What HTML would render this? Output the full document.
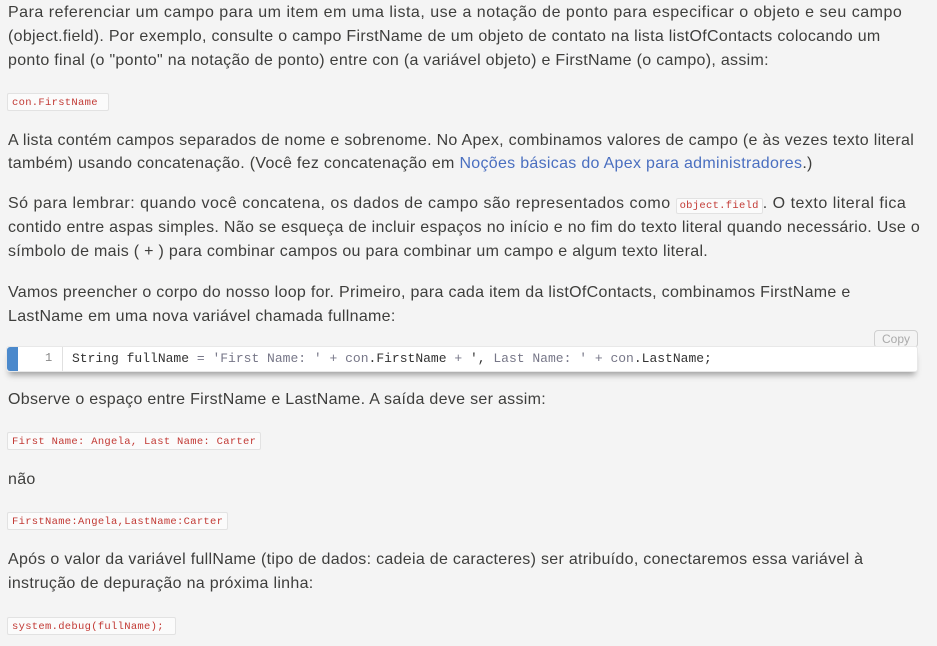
<!DOCTYPE html>
<html><head><meta charset="utf-8"><style>
html,body{margin:0;padding:0;background:#f4f4f4;width:937px;height:646px;overflow:hidden;position:relative}
.l{position:absolute;left:8px;font-family:"Liberation Sans",sans-serif;font-size:16px;letter-spacing:0.3px;color:#3e3e3c;white-space:nowrap;line-height:20px}
a{color:#4a6fc0;text-decoration:none}
.chip{position:absolute;left:7px;height:18px;background:#fbfbfb;border:1px solid #e2e2e2;border-radius:2px;font-family:"Liberation Mono",monospace;font-size:10.5px;letter-spacing:0.3px;color:#c23934;line-height:18px;padding:0 4px;box-sizing:border-box;white-space:nowrap}
.ic{font-family:"Liberation Mono",monospace;font-size:10.5px;letter-spacing:0.3px;color:#c23934;background:#fbfbfb;border:1px solid #e2e2e2;border-radius:2px;padding:1px 3px}
.code{position:absolute;left:6px;top:346px;width:912px;height:26px;background:#fff;border-radius:3px;box-shadow:0 6px 6px -3px rgba(0,0,0,.35);border:1px solid #e8e8e8;box-sizing:border-box}
.bar{position:absolute;left:0;top:0;width:11px;height:100%;background:#4b89cc;border-radius:3px 0 0 3px}
.num{position:absolute;left:38px;top:4px;font-family:"Liberation Mono",monospace;font-size:12px;color:#888}
.sep{position:absolute;left:55px;top:0;width:1px;height:100%;background:#e0e0e0}
.src{position:absolute;left:65px;top:4px;font-family:"Liberation Mono",monospace;font-size:13px;color:#333;white-space:nowrap}
.g{color:#778}
.copy{position:absolute;left:874px;top:330px;width:42px;height:16px;border:1px solid #d0d0d0;border-radius:4px;background:#f4f4f4;color:#aaa;font-family:"Liberation Sans",sans-serif;font-size:12px;text-align:center;line-height:16px}
</style></head><body>
<div class="l" style="top:3px;letter-spacing:0.5px">Para referenciar um campo para um item em uma lista, use a notação de ponto para especificar o objeto e seu campo</div>
<div class="l" style="top:27px">(object.field). Por exemplo, consulte o campo FirstName de um objeto de contato na lista listOfContacts colocando um</div>
<div class="l" style="top:51px">ponto final (o "ponto" na notação de ponto) entre con (a variável objeto) e FirstName (o campo), assim:</div>
<div class="chip" style="top:93px;width:102px">con.FirstName</div>
<div class="l" style="top:131px">A lista contém campos separados de nome e sobrenome. No Apex, combinamos valores de campo (e às vezes texto literal</div>
<div class="l" style="top:154px">também) usando concatenação. (Você fez concatenação em <a>Noções básicas do Apex para administradores</a>.)</div>
<div class="l" style="top:194px;letter-spacing:0.5px">Só para lembrar: quando você concatena, os dados de campo são representados como <span class="ic">object.field</span>. O texto literal fica</div>
<div class="l" style="top:218px">contido entre aspas simples. Não se esqueça de incluir espaços no início e no fim do texto literal quando necessário. Use o</div>
<div class="l" style="top:242px">símbolo de mais ( + ) para combinar campos ou para combinar um campo e algum texto literal.</div>
<div class="l" style="top:283px">Vamos preencher o corpo do nosso loop for. Primeiro, para cada item da listOfContacts, combinamos FirstName e</div>
<div class="l" style="top:307px">LastName em uma nova variável chamada fullname:</div>
<div class="copy">Copy</div>
<div class="code"><div class="bar"></div><div class="num">1</div><div class="sep"></div>
<div class="src">String fullName <span class="g">=</span> <span class="g">'First Name: '</span> <span class="g">+</span> <span class="g">con</span>.FirstName <span class="g">+</span> ', <span class="g">Last Name: '</span> <span class="g">+</span> <span class="g">con</span>.LastName;</div></div>
<div class="l" style="top:390px">Observe o espaço entre FirstName e LastName. A saída deve ser assim:</div>
<div class="chip" style="top:432px;width:254px">First Name: Angela, Last Name: Carter</div>
<div class="l" style="top:470px">não</div>
<div class="chip" style="top:512px;width:221px">FirstName:Angela,LastName:Carter</div>
<div class="l" style="top:550px">Após o valor da variável fullName (tipo de dados: cadeia de caracteres) ser atribuído, conectaremos essa variável à</div>
<div class="l" style="top:574px">instrução de depuração na próxima linha:</div>
<div class="chip" style="top:617px;width:169px">system.debug(fullName);</div>
</body></html>
